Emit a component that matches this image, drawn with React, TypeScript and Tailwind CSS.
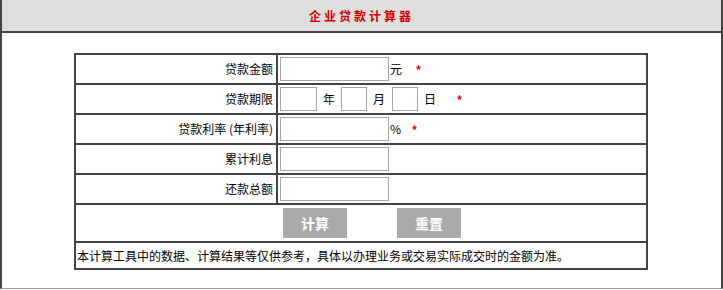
import React, { useState } from "react";

const font = { fontFamily: '"Noto Sans CJK SC", "Noto Sans", sans-serif' };

const Star: React.FC<{ className?: string }> = ({ className = "" }) => (
    <span className={`text-[#cc0000] text-[15px] leading-none mt-[3px] ${className}`}>*</span>
);

const Row: React.FC<{ label: string; children: React.ReactNode }> = ({ label, children }) => (
    <div className="flex h-[30px] border-b-2 border-[#444]">
        <div className="w-[202px] border-r-2 border-[#444] flex items-center justify-end pr-[3px] text-[12px] text-black">
            {label}
        </div>
        <div className="flex-1 flex items-center pl-[2px] text-[12px] text-black">{children}</div>
    </div>
);

const inputCls = "h-[24px] border border-[#a6a6a6] bg-white outline-none px-1 text-[12px]";

const App: React.FC = () => {
    const [form, setForm] = useState({ amount: "", year: "", month: "", day: "", rate: "", interest: "", total: "" });

    const handleChange = (e: React.ChangeEvent<HTMLInputElement>) => {
        setForm({ ...form, [e.target.name]: e.target.value });
    };

    const reset = () => setForm({ amount: "", year: "", month: "", day: "", rate: "", interest: "", total: "" });

    return (
        <div className="w-[723px] h-[290px] bg-white" style={font}>
            <div className="w-[723px] border-l-2 border-r-2 border-b border-l-[#444] border-r-[#444] border-b-[#999]">
                <div className="h-[33px] bg-[#dedede] border-b-2 border-[#444] flex items-center justify-center">
                    <span className="text-[12px] font-bold text-[#cc0000] tracking-[3px]">企业贷款计算器</span>
                </div>
                <div className="pt-[20px] pb-[18px]">
                    <div className="w-[574px] ml-[72px] border-2 border-[#444]">
                        <Row label="贷款金额">
                            <input name="amount" value={form.amount} onChange={handleChange} className={`${inputCls} w-[109px]`} />
                            <span className="ml-[1px]">元</span>
                            <Star className="ml-[13px]" />
                        </Row>
                        <Row label="贷款期限">
                            <input name="year" value={form.year} onChange={handleChange} className={`${inputCls} w-[37px]`} />
                            <span className="ml-[6px]">年</span>
                            <input name="month" value={form.month} onChange={handleChange} className={`${inputCls} w-[26px] ml-[6px]`} />
                            <span className="ml-[6px]">月</span>
                            <input name="day" value={form.day} onChange={handleChange} className={`${inputCls} w-[26px] ml-[7px]`} />
                            <span className="ml-[6px]">日</span>
                            <Star className="ml-[20px]" />
                        </Row>
                        <Row label="贷款利率 (年利率)">
                            <input name="rate" value={form.rate} onChange={handleChange} className={`${inputCls} w-[109px]`} />
                            <span className="ml-[1px]">%</span>
                            <Star className="ml-[10px]" />
                        </Row>
                        <Row label="累计利息">
                            <input name="interest" value={form.interest} onChange={handleChange} className={`${inputCls} w-[109px]`} />
                        </Row>
                        <Row label="还款总额">
                            <input name="total" value={form.total} onChange={handleChange} className={`${inputCls} w-[109px]`} />
                        </Row>
                        <div className="h-[38px] border-b-2 border-[#444] flex items-center pl-[207px] gap-[50px]">
                            <button className="w-[64px] h-[30px] bg-[#aaaaaa] text-white font-bold text-[14px]">计算</button>
                            <button onClick={reset} className="w-[64px] h-[30px] bg-[#aaaaaa] text-white font-bold text-[14px]">重置</button>
                        </div>
                        <div className="h-[25px] flex items-center pl-[1px] text-[12px] text-black">
                            本计算工具中的数据、计算结果等仅供参考，具体以办理业务或交易实际成交时的金额为准。
                        </div>
                    </div>
                </div>
            </div>
        </div>
    );
};

export default App;
